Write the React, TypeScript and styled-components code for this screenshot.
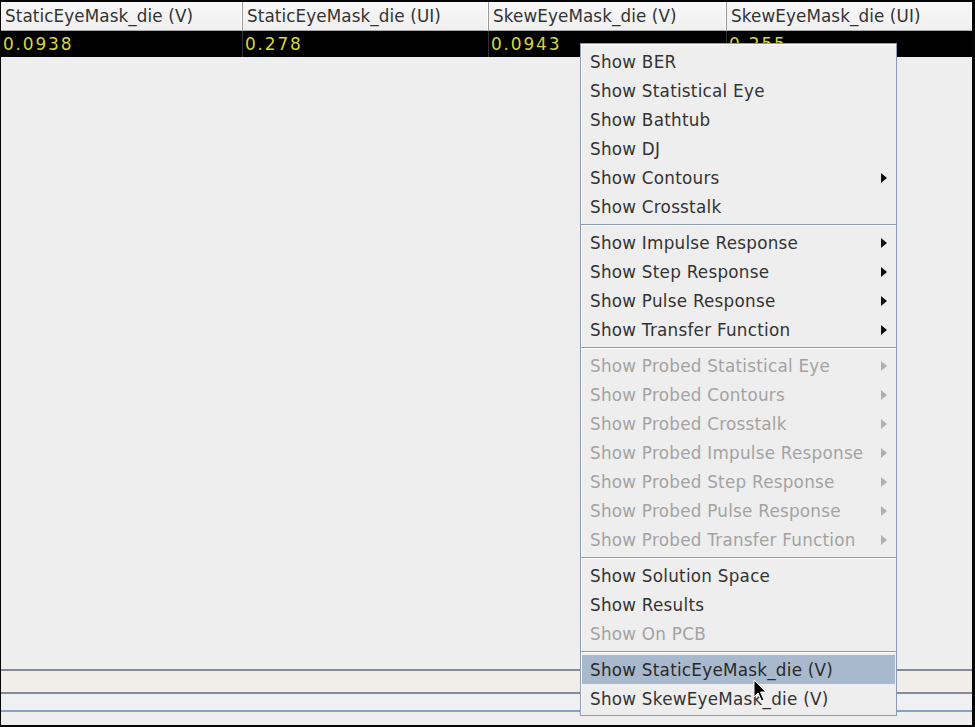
import React from "react";
import styled, { createGlobalStyle, css } from "styled-components";

const Global = createGlobalStyle`
  html, body { margin: 0; padding: 0; background: #000; }
  body { font-family: "DejaVu Sans", "Liberation Sans", sans-serif; }
  * { box-sizing: border-box; }
`;

const Frame = styled.div`
  position: relative;
  width: 975px;
  height: 727px;
  border-style: solid;
  border-color: #050505;
  border-width: 2px 3px 2px 1px;
  background: #eeeeee;
  display: flex;
  flex-direction: column;
  overflow: hidden;
`;

const HeaderRow = styled.div`
  display: grid;
  grid-template-columns: 241px 246px 238px 1fr;
  height: 29px;
  background: linear-gradient(#f8f8f8, #efefef);
`;

const HeaderCell = styled.div`
  display: flex;
  align-items: center;
  padding-left: 4px;
  font-size: 16.8px;
  letter-spacing: 0.1px;
  color: #333;
  white-space: nowrap;
  overflow: hidden;
  border-left: ${(p: { first?: boolean }) => (p.first ? "none" : "1px solid #9a9a9a")};
  border-right: 1px solid #ffffff;
  border-bottom: 1px solid #a8a8a8;
`;

const DataRow = styled.div`
  display: grid;
  grid-template-columns: 241px 246px 238px 1fr;
  height: 26px;
  background: #000;
`;

const DataCell = styled.div`
  display: flex;
  align-items: center;
  padding-left: 2px;
  font-size: 17px;
  letter-spacing: 1.8px;
  color: #d4d83c;
  white-space: nowrap;
  border-left: ${(p: { first?: boolean }) => (p.first ? "none" : "1px solid #303030")};
`;

const Body = styled.div`
  flex: 1;
  display: flex;
  flex-direction: column;
  justify-content: flex-end;
`;

const Band = styled.div<{ $h: number; $bg: string; $line: string }>`
  height: ${(p) => p.$h}px;
  background: ${(p) => p.$bg};
  border-top: 2px solid ${(p) => p.$line};
`;

const Menu = styled.div`
  position: absolute;
  left: 579px;
  top: 41px;
  width: 317px;
  background: #eeeeee;
  border: 1px solid #8d9ab3;
  box-shadow: inset 1px 1px 0 #ffffff;
  padding: 3px 1px 2px 1px;
  display: flex;
  flex-direction: column;
`;

const Item = styled.div<{ $disabled?: boolean; $active?: boolean }>`
  position: relative;
  height: 29px;
  padding-top: 2px;
  line-height: 27px;
  padding-left: 8px;
  font-size: 16.8px;
  letter-spacing: 0.25px;
  color: #333333;
  white-space: nowrap;
  ${(p) =>
    p.$disabled &&
    css`
      color: #a3a3a3;
    `}
  ${(p) =>
    p.$active &&
    css`
      background: #a9b9cd;
      color: #2a2a2a;
    `}
`;

const Arrow = styled.span<{ $disabled?: boolean }>`
  position: absolute;
  right: 8px;
  top: 10px;
  width: 0;
  height: 0;
  border-top: 5px solid transparent;
  border-bottom: 5px solid transparent;
  border-left: 6px solid ${(p) => (p.$disabled ? "#b0b0b0" : "#111")};
`;

const Separator = styled.div`
  height: 7px;
  display: flex;
  flex-direction: column;
  justify-content: center;
  margin: 0 -1px;
  &::before {
    content: "";
    height: 1px;
    background: #8d9ab3;
  }
  &::after {
    content: "";
    height: 1px;
    background: #ffffff;
  }
`;

const Cursor = styled.svg`
  position: absolute;
  left: 752px;
  top: 677px;
`;

type Entry = { label: string; sub?: boolean; disabled?: boolean; active?: boolean } | "sep";

const entries: Entry[] = [
  { label: "Show BER" },
  { label: "Show Statistical Eye" },
  { label: "Show Bathtub" },
  { label: "Show DJ" },
  { label: "Show Contours", sub: true },
  { label: "Show Crosstalk" },
  "sep",
  { label: "Show Impulse Response", sub: true },
  { label: "Show Step Response", sub: true },
  { label: "Show Pulse Response", sub: true },
  { label: "Show Transfer Function", sub: true },
  "sep",
  { label: "Show Probed Statistical Eye", sub: true, disabled: true },
  { label: "Show Probed Contours", sub: true, disabled: true },
  { label: "Show Probed Crosstalk", sub: true, disabled: true },
  { label: "Show Probed Impulse Response", sub: true, disabled: true },
  { label: "Show Probed Step Response", sub: true, disabled: true },
  { label: "Show Probed Pulse Response", sub: true, disabled: true },
  { label: "Show Probed Transfer Function", sub: true, disabled: true },
  "sep",
  { label: "Show Solution Space" },
  { label: "Show Results" },
  { label: "Show On PCB", disabled: true },
  "sep",
  { label: "Show StaticEyeMask_die (V)", active: true },
  { label: "Show SkewEyeMask_die (V)" },
];

const headers = ["StaticEyeMask_die (V)", "StaticEyeMask_die (UI)", "SkewEyeMask_die (V)", "SkewEyeMask_die (UI)"];
const values = ["0.0938", "0.278", "0.0943", "0.255"];

export default function App() {
  return (
    <Frame>
      <Global />
      <HeaderRow>
        {headers.map((h, i) => (
          <HeaderCell key={h} first={i === 0}>
            {h}
          </HeaderCell>
        ))}
      </HeaderRow>
      <DataRow>
        {values.map((v, i) => (
          <DataCell key={i} first={i === 0}>
            {v}
          </DataCell>
        ))}
      </DataRow>
      <Body>
        <Band $h={23} $bg="#f1eee9" $line="#858b96" />
        <Band $h={18} $bg="#eef0f2" $line="#858b96" />
        <Band $h={15} $bg="#eeeeee" $line="#8a9fc4" />
      </Body>
      <Menu>
        {entries.map((e, i) =>
          e === "sep" ? (
            <Separator key={i} />
          ) : (
            <Item key={i} $disabled={e.disabled} $active={e.active}>
              {e.label}
              {e.sub && <Arrow $disabled={e.disabled} />}
            </Item>
          )
        )}
      </Menu>
      <Cursor width="15" height="24" viewBox="0 0 15 24">
        <path d="M1 1 L1 18 L5 14 L8.5 22 L11 21 L7.5 13 L13 13 Z" fill="#000" stroke="#fff" strokeWidth="1" />
      </Cursor>
    </Frame>
  );
}
